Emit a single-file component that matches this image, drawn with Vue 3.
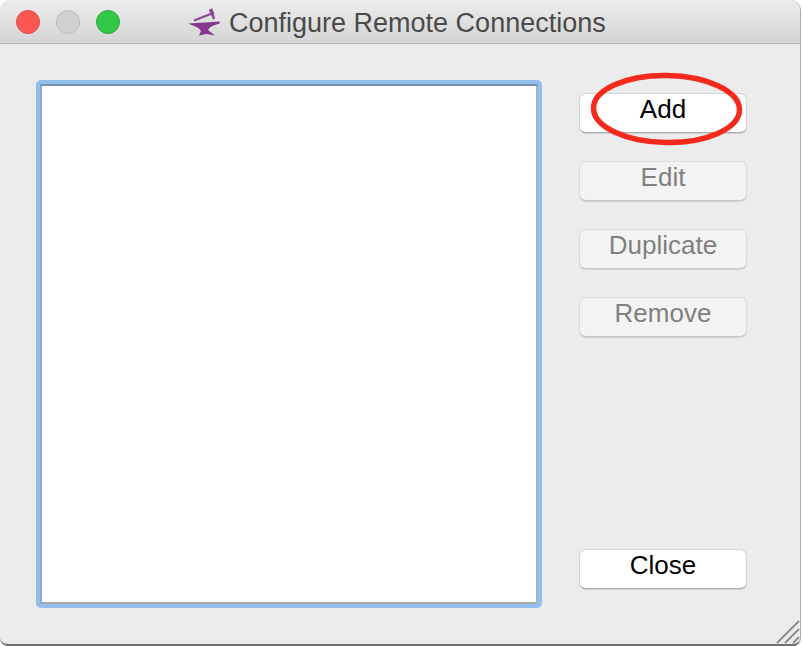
<template>
  <div class="window">
    <header class="titlebar">
      <div class="lights">
        <span class="light red"></span>
        <span class="light grey"></span>
        <span class="light green"></span>
      </div>
      <div class="title">
        <svg class="anvil" viewBox="0 0 32 28" xmlns="http://www.w3.org/2000/svg">
          <path class="hammer" d="M6 12.5 L24 5.5 L26 11" />
          <path class="hammer head" d="M22.5 1 L25 7" />
          <path class="body" d="M0 15.5 L32 13.5 L31.5 15.5 L27 17 Q21.5 18.5 20 22 L27 27.5 L18.5 26 L11 27.5 L13 23 Q11 19.5 6 18 Z" />
        </svg>
        <span class="title-text">Configure Remote Connections</span>
      </div>
    </header>
    <main class="content">
      <div class="list"></div>
      <div class="actions">
        <div class="group">
          <button v-for="b in buttons" :key="b.label" class="btn" :disabled="b.disabled">{{ b.label }}</button>
        </div>
        <button class="btn">Close</button>
      </div>
    </main>
    <svg class="ring" viewBox="0 0 156 74" xmlns="http://www.w3.org/2000/svg">
      <ellipse cx="77.5" cy="37" rx="73" ry="33.5" transform="rotate(0.8 77.5 37)" />
    </svg>
    <svg class="grip" viewBox="0 0 24 24" xmlns="http://www.w3.org/2000/svg">
      <path d="M1 23 L23 1 M9 23 L23 9 M17 23 L23 17" />
    </svg>
  </div>
</template>

<script setup>
const buttons = [
  { label: "Add", disabled: false },
  { label: "Edit", disabled: true },
  { label: "Duplicate", disabled: true },
  { label: "Remove", disabled: true },
];
</script>

<style>
html,
body {
  background: #fff;
}
</style>

<style scoped>
.window {
  position: relative;
  width: 801px;
  height: 646px;
  background: #ececec;
  border-right: 1px solid #a8a8a8;
  border-bottom: 2px solid #6f6f6f;
  border-radius: 10px 10px 8px 8px;
  box-sizing: border-box;
  overflow: hidden;
  font-family: "Liberation Sans", Arial, sans-serif;
}

.titlebar {
  display: flex;
  align-items: center;
  height: 44px;
  box-sizing: border-box;
  padding-left: 16px;
  background: linear-gradient(#ececec, #d5d5d5);
  border-bottom: 1px solid #b5b5b5;
}

.lights {
  display: flex;
  gap: 16px;
}

.light {
  width: 24px;
  height: 24px;
  box-sizing: border-box;
  border-radius: 50%;
  border: 1px solid;
}

.red {
  background: #fc5753;
  border-color: #df4744;
}

.grey {
  background: #d0d0d0;
  border-color: #bcbcbc;
}

.green {
  background: #33c748;
  border-color: #27aa35;
}

.title {
  display: flex;
  align-items: center;
  gap: 9px;
  margin-left: 68px;
  font-size: 27px;
  color: #4a4a4a;
}

.title-text {
  margin-top: 3px;
}

.anvil {
  width: 32px;
  height: 28px;
  margin-top: 1px;
}

.hammer {
  fill: none;
  stroke: #8a4a96;
  stroke-width: 2.4;
}

.head {
  stroke-width: 3.5;
}

.body {
  fill: #86398f;
}

.content {
  display: flex;
  padding: 36px 0 0 36px;
}

.list {
  width: 506px;
  height: 528px;
  box-sizing: border-box;
  background: #fff;
  border: 4px solid #92bfee;
  border-radius: 5px;
  box-shadow: inset 0 2px 0 #7892ad, inset 2px 0 0 #94a8bd, inset -2px 0 0 #a9b3bf, inset 0 -2px 0 #a8a8a8;
}

.actions {
  display: flex;
  flex-direction: column;
  justify-content: space-between;
  width: 168px;
  height: 496px;
  margin: 13px 0 0 37px;
}

.group {
  display: flex;
  flex-direction: column;
  gap: 28px;
}

.btn {
  display: block;
  width: 168px;
  height: 40px;
  padding: 0 0 7px;
  box-sizing: border-box;
  background: #fff;
  border: 1px solid #d4d4d4;
  border-bottom-color: #a9a9a9;
  border-radius: 7px;
  box-shadow: 0 1px 1px rgba(0, 0, 0, 0.12);
  font-family: inherit;
  font-size: 26px;
  color: #000;
}

.btn:disabled {
  background: #f3f3f3;
  border-color: #dcdcdc;
  border-bottom-color: #c8c8c8;
  color: #808080;
}

.ring {
  position: absolute;
  left: 589px;
  top: 72px;
  width: 156px;
  height: 74px;
  fill: none;
  stroke: #f5291c;
  stroke-width: 5.5;
}

.grip {
  position: absolute;
  right: 0;
  bottom: 0;
  width: 24px;
  height: 24px;
  fill: none;
  stroke: #8a8a8a;
  stroke-width: 1.8;
}
</style>
